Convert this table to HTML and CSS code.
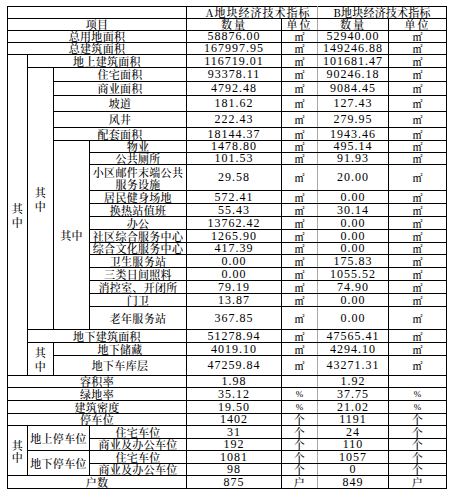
FILE: index.html
```html
<!DOCTYPE html>
<html lang="zh-CN">
<head>
<meta charset="utf-8">
<title>经济技术指标</title>
<link rel="stylesheet" href="styles.css">
</head>
<body>
<table class="sheet">
<colgroup>
<col class="c1"><col class="c2"><col class="c3"><col class="c4">
<col class="c5"><col class="c6"><col class="c7"><col class="c8">
</colgroup>
<tbody>
<tr class="r12"><td colspan="4"></td><td colspan="2" class="gr ha">A地块经济技术指标</td><td colspan="2" class="hb">B地块经济技术指标</td></tr>
<tr class="r12"><td colspan="4">项目</td><td class="hd">数量</td><td class="gr hd">单位</td><td class="hd">数量</td><td class="hd">单位</td></tr>
<tr class="r12"><td colspan="4">总用地面积</td><td class="num">58876.00</td><td class="gr u">㎡</td><td class="num">52940.00</td><td class="u">㎡</td></tr>
<tr class="r12"><td colspan="4">总建筑面积</td><td class="num">167997.95</td><td class="gr u">㎡</td><td class="num">149246.88</td><td class="u">㎡</td></tr>
<tr class="r13"><td rowspan="22" class="vt">其<br>中</td><td colspan="3">地上建筑面积</td><td class="num">116719.01</td><td class="gr u">㎡</td><td class="num">101681.47</td><td class="u">㎡</td></tr>
<tr class="r14"><td rowspan="18" class="vt">其<br>中</td><td colspan="2">住宅面积</td><td class="num">93378.11</td><td class="gr u">㎡</td><td class="num">90246.18</td><td class="u">㎡</td></tr>
<tr class="r14"><td colspan="2">商业面积</td><td class="num">4792.48</td><td class="gr u">㎡</td><td class="num">9084.45</td><td class="u">㎡</td></tr>
<tr class="r16"><td colspan="2">坡道</td><td class="num">181.62</td><td class="gr u">㎡</td><td class="num">127.43</td><td class="u">㎡</td></tr>
<tr class="r16"><td colspan="2">风井</td><td class="num">222.43</td><td class="gr u">㎡</td><td class="num">279.95</td><td class="u">㎡</td></tr>
<tr class="r13"><td colspan="2">配套面积</td><td class="num">18144.37</td><td class="gr u">㎡</td><td class="num">1943.46</td><td class="u">㎡</td></tr>
<tr class="r12"><td rowspan="13">其中</td><td>物业</td><td class="num">1478.80</td><td class="gr u">㎡</td><td class="num">495.14</td><td class="u">㎡</td></tr>
<tr class="r12"><td>公共厕所</td><td class="num">101.53</td><td class="gr u">㎡</td><td class="num">91.93</td><td class="u">㎡</td></tr>
<tr class="r26"><td class="two">小区邮件末端公共<br>服务设施</td><td class="num">29.58</td><td class="gr u">㎡</td><td class="num">20.00</td><td class="u">㎡</td></tr>
<tr class="r13"><td>居民健身场地</td><td class="num">572.41</td><td class="gr u">㎡</td><td class="num">0.00</td><td class="u">㎡</td></tr>
<tr class="r13"><td>换热站值班</td><td class="num">55.43</td><td class="gr u">㎡</td><td class="num">30.14</td><td class="u">㎡</td></tr>
<tr class="r13"><td>办公</td><td class="num">13762.42</td><td class="gr u">㎡</td><td class="num">0.00</td><td class="u">㎡</td></tr>
<tr class="r13"><td>社区综合服务中心</td><td class="num">1265.90</td><td class="gr u">㎡</td><td class="num">0.00</td><td class="u">㎡</td></tr>
<tr class="r12"><td>综合文化服务中心</td><td class="num">417.39</td><td class="gr u">㎡</td><td class="num">0.00</td><td class="u">㎡</td></tr>
<tr class="r13"><td>卫生服务站</td><td class="num">0.00</td><td class="gr u">㎡</td><td class="num">175.83</td><td class="u">㎡</td></tr>
<tr class="r13"><td>三类日间照料</td><td class="num">0.00</td><td class="gr u">㎡</td><td class="num">1055.52</td><td class="u">㎡</td></tr>
<tr class="r13"><td>消控室、开闭所</td><td class="num">79.19</td><td class="gr u">㎡</td><td class="num">74.90</td><td class="u">㎡</td></tr>
<tr class="r13"><td>门卫</td><td class="num">13.87</td><td class="gr u">㎡</td><td class="num">0.00</td><td class="u">㎡</td></tr>
<tr class="r23"><td>老年服务站</td><td class="num">367.85</td><td class="gr u">㎡</td><td class="num">0.00</td><td class="u">㎡</td></tr>
<tr class="r13"><td colspan="3">地下建筑面积</td><td class="num">51278.94</td><td class="gr u">㎡</td><td class="num">47565.41</td><td class="u">㎡</td></tr>
<tr class="r13"><td rowspan="2" class="vt">其<br>中</td><td colspan="2">地下储藏</td><td class="num">4019.10</td><td class="gr u">㎡</td><td class="num">4294.10</td><td class="u">㎡</td></tr>
<tr class="r20"><td colspan="2">地下车库层</td><td class="num">47259.84</td><td class="gr u">㎡</td><td class="num">43271.31</td><td class="u">㎡</td></tr>
<tr class="r12"><td colspan="4">容积率</td><td class="num">1.98</td><td class="gr"></td><td class="num">1.92</td><td></td></tr>
<tr class="r13"><td colspan="4">绿地率</td><td class="num">35.12</td><td class="gr pc">%</td><td class="num">37.75</td><td class="pc">%</td></tr>
<tr class="r13"><td colspan="4">建筑密度</td><td class="num">19.50</td><td class="gr pc">%</td><td class="num">21.02</td><td class="pc">%</td></tr>
<tr class="r12"><td colspan="4">停车位</td><td class="num">1402</td><td class="gr">个</td><td class="num">1191</td><td>个</td></tr>
<tr class="r13"><td rowspan="4" class="vt vp">其<br>中</td><td colspan="2" rowspan="2">地上停车位</td><td>住宅车位</td><td class="num">31</td><td class="gr">个</td><td class="num">24</td><td>个</td></tr>
<tr class="r12"><td>商业及办公车位</td><td class="num">192</td><td class="gr">个</td><td class="num">110</td><td>个</td></tr>
<tr class="r13"><td colspan="2" rowspan="2">地下停车位</td><td>住宅车位</td><td class="num">1081</td><td class="gr">个</td><td class="num">1057</td><td>个</td></tr>
<tr class="r12"><td>商业及办公车位</td><td class="num">98</td><td class="gr">个</td><td class="num">0</td><td>个</td></tr>
<tr class="r13"><td colspan="4">户数</td><td class="num">875</td><td class="gr">户</td><td class="num">849</td><td>户</td></tr>
</tbody>
</table>
</body>
</html>
```

FILE: styles.css
```css
html, body {
  margin: 0;
  background: #ffffff;
}
body {
  padding: 6px 0 0 7px;
  font-family: "Noto Serif CJK SC", "Noto Sans CJK SC", "Liberation Serif", serif;
  color: #000;
}
.sheet {
  border-collapse: collapse;
  table-layout: fixed;
  width: 440px;
}
.c1 { width: 20px; }
.c2 { width: 26px; }
.c3 { width: 36px; }
.c4 { width: 97px; }
.c5 { width: 95px; }
.c6 { width: 36px; }
.c7 { width: 71px; }
.c8 { width: 58px; }
.sheet td {
  border: 1px solid #000;
  padding: 0;
  text-align: center;
  vertical-align: middle;
  font-size: 11px;
  font-weight: 500;
  line-height: 11px;
  letter-spacing: 0.3px;
  white-space: nowrap;
  color: #000;
}
.sheet td.gr { border-right-color: #a8a8a8; }
.sheet td.ha { letter-spacing: 1px; padding-left: 12px; }
.sheet td.hb { letter-spacing: 0.2px; }
.sheet td.hd { letter-spacing: 2px; }
.sheet td.num {
  font-family: "Liberation Serif", serif;
  font-weight: 400;
  font-size: 12px;
  letter-spacing: 1px;
}
.sheet td.u { font-size: 10px; letter-spacing: 0; }
.sheet td.pc { font-family: "Liberation Serif", serif; font-size: 9px; letter-spacing: 0; }
.sheet td.vt { line-height: 14px; white-space: normal; }
.sheet td.vp { line-height: 12px; }
.sheet td.two { line-height: 12px; }
.r12 { height: 12px; }
.r13 { height: 13px; }
.r14 { height: 14px; }
.r16 { height: 16px; }
.r20 { height: 20px; }
.r23 { height: 23px; }
.r26 { height: 26px; }
```
